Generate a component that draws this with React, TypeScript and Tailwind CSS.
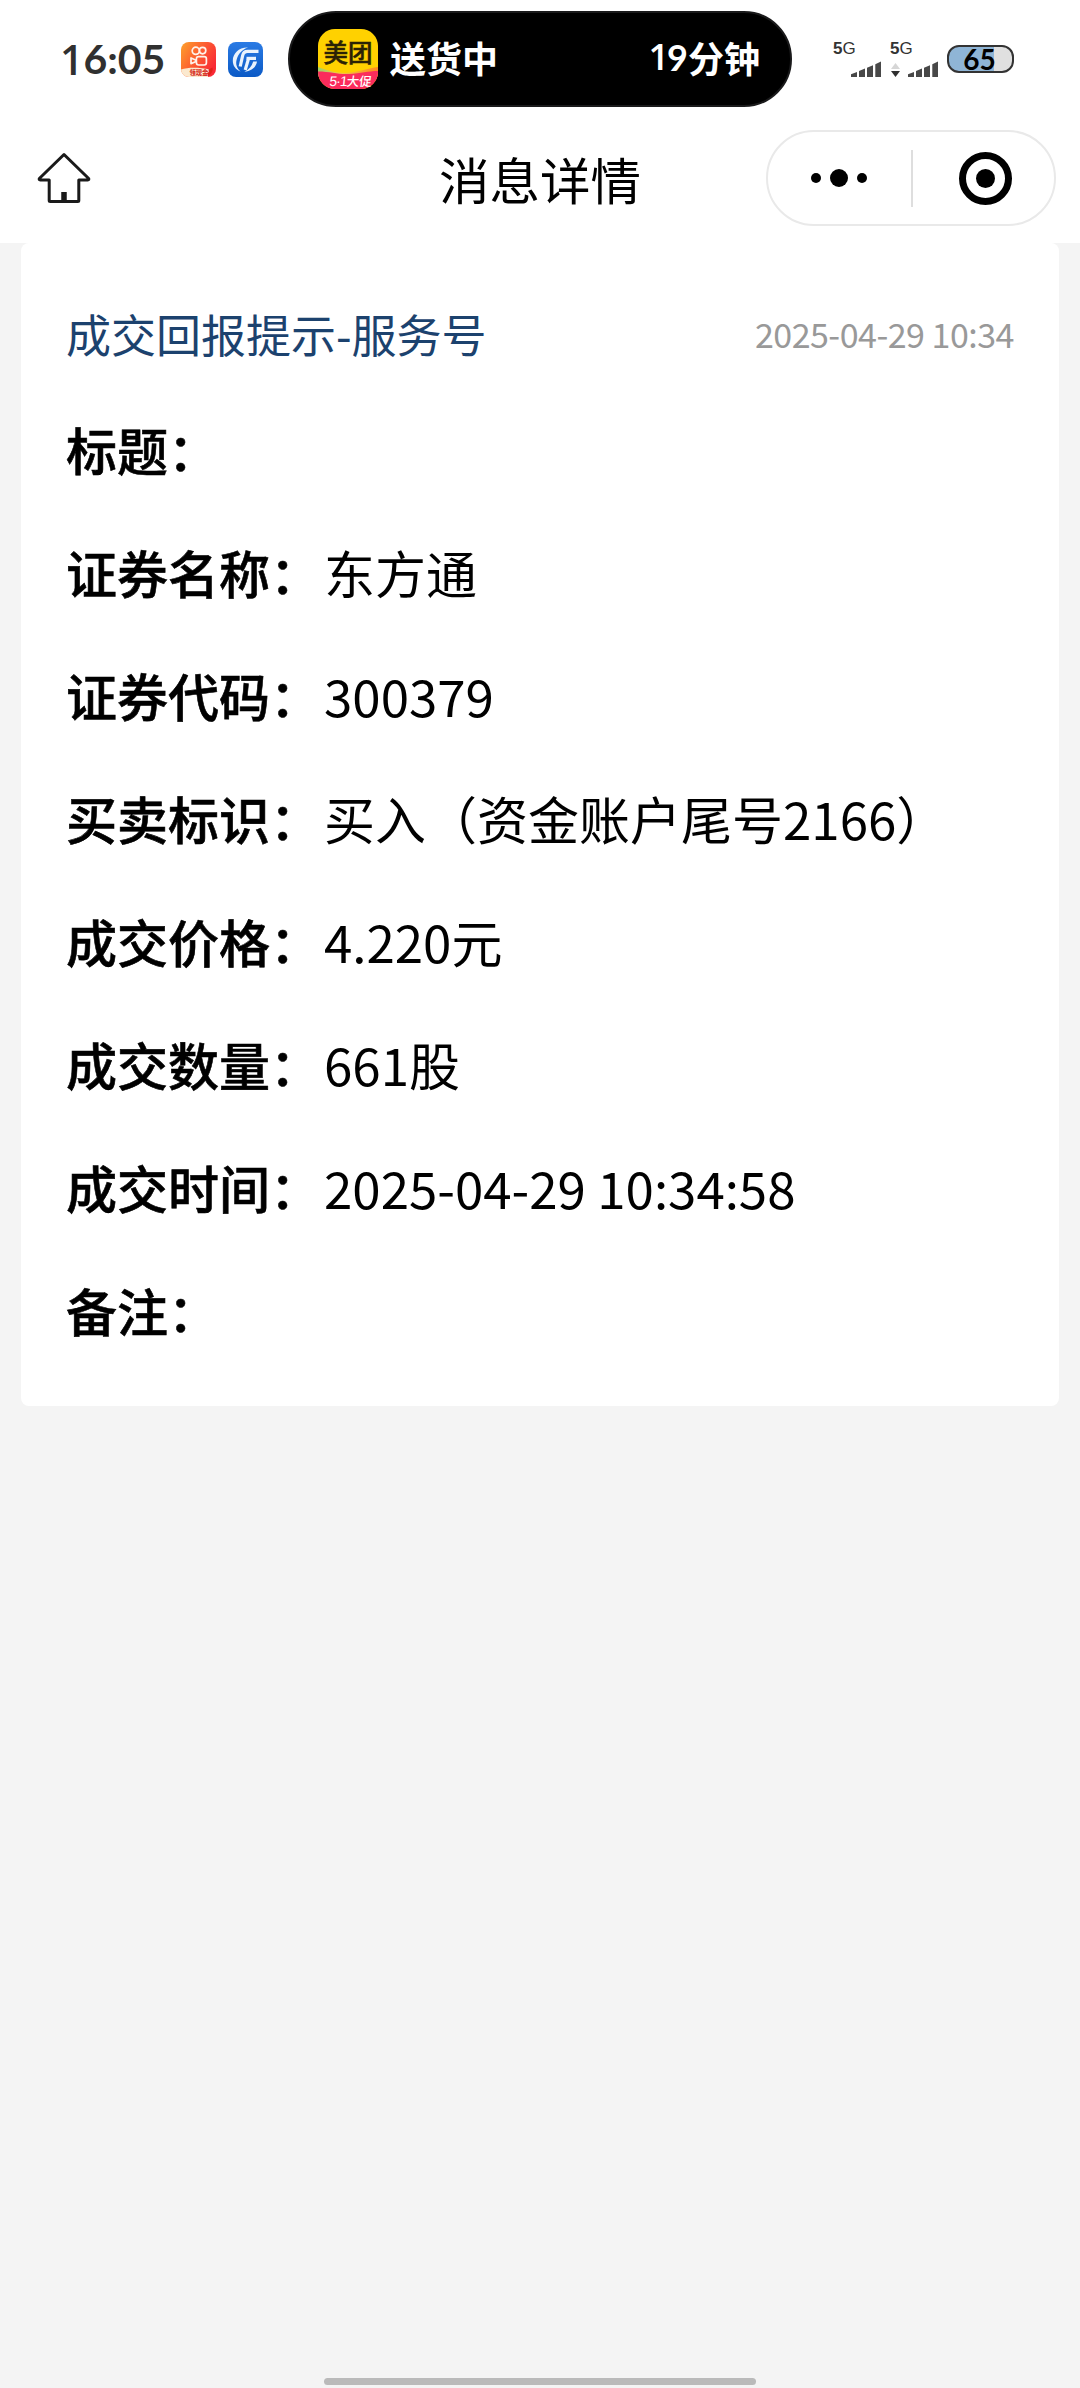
import { clsx } from "clsx";

// --- Message content ---

const message = {
  title: "成交回报提示-服务号",
  time: "2025-04-29 10:34",
};

const fields = [
  { label: "标题", value: "" },
  { label: "证券名称", value: "东方通" },
  { label: "证券代码", value: "300379" },
  { label: "买卖标识", value: "买入（资金账户尾号2166）" },
  { label: "成交价格", value: "4.220元" },
  { label: "成交数量", value: "661股" },
  { label: "成交时间", value: "2025-04-29 10:34:58" },
  { label: "备注", value: "" },
];

// --- Icons ---

function KuaishouIcon() {
  return (
    <svg className="h-[35px] w-[35px]" viewBox="0 0 35 35">
      <defs>
        <linearGradient id="ks" x1="0" y1="0" x2="1" y2="0.6">
          <stop offset="0" stopColor="#FDA22C" />
          <stop offset="0.5" stopColor="#FD6130" />
          <stop offset="1" stopColor="#F92A35" />
        </linearGradient>
        <clipPath id="ksClip">
          <rect width="35" height="35" rx="8" />
        </clipPath>
      </defs>
      <g clipPath="url(#ksClip)">
        <rect width="35" height="35" fill="url(#ks)" />
        <g fill="none" stroke="#FFF3EA" strokeWidth="1.7" strokeLinejoin="round">
          <circle cx="14.8" cy="8.8" r="3.6" />
          <circle cx="21.6" cy="8.6" r="3.2" />
          <rect x="15.4" y="14.6" width="10" height="8.4" rx="2.2" />
          <path d="M14.6 18 10 16v5.600l4.600-1.800z" />
        </g>
        <path d="M0 27.500C8 25 18 25.400 29 27.500L27 35H0z" fill="#FBE9CF" />
        <text
          x="8.5"
          y="33.4"
          fontSize="6.3"
          fontWeight="900"
          fill="#D8352B"
          fontFamily="Noto Sans CJK SC, sans-serif"
        >
          领现金
        </text>
        <path d="M31.500 25.500c1 3-1 6-4 9l-1.600-3.500 2-1-.4-2.500z" fill="#E2231A" />
      </g>
    </svg>
  );
}

function BrokerIcon() {
  return (
    <svg className="h-[35px] w-[35px]" viewBox="0 0 35 35">
      <defs>
        <linearGradient id="broker" x1="0" y1="0" x2="0" y2="1">
          <stop offset="0" stopColor="#2B7BE4" />
          <stop offset="1" stopColor="#0B5AC6" />
        </linearGradient>
      </defs>
      <rect width="35" height="35" rx="8" fill="url(#broker)" />
      <path d="M20 5.600C11 5.200 4.800 11.500 4.800 18.800c0 5 3 9 7.700 10.700-3.600-3-5.200-7.400-3.800-12C10.200 12 14 7.600 20 5.600z" fill="#EAF3FD" />
      <g fill="none" stroke="#EAF3FD" strokeWidth="3.2">
        <path d="M30.500 9.400H19.500c-3 0-4.200 1.400-4.800 4L12.200 24.500" />
        <path d="M18.500 16.400h9.500" />
        <path d="M20.600 16.400 17.200 28" />
      </g>
      <path d="M29 19.500c-.8 5.600-5.400 9.800-12.600 10.200 4.200-2 7.400-5.200 8.800-10.200z" fill="#EAF3FD" />
    </svg>
  );
}

function MeituanIcon() {
  return (
    <svg className="h-[60px] w-[60px]" viewBox="0 0 60 60">
      <defs>
        <clipPath id="mtClip">
          <rect width="60" height="60" rx="17" />
        </clipPath>
        <linearGradient id="mtWave" x1="0" y1="0" x2="1" y2="0">
          <stop offset="0" stopColor="#9BD46A" />
          <stop offset="0.35" stopColor="#F3C64C" />
          <stop offset="1" stopColor="#FF8A1F" />
        </linearGradient>
      </defs>
      <g clipPath="url(#mtClip)">
        <rect width="60" height="60" fill="#FFD100" />
        <path d="M0 38c10 4 22 7 33 5.500C43 42.500 50 39 60 38v10H0z" fill="url(#mtWave)" />
        <path d="M0 42.500c12 0 20 3 31 2.500C43 44.500 50 42 60 42v18H0z" fill="#FB2C5C" />
      </g>
      <text
        x="5.5"
        y="32.5"
        fontSize="24.5"
        fontWeight="500"
        fill="#2A2205"
        stroke="#2A2205"
        strokeWidth="0.5"
        fontFamily="Noto Sans CJK SC, sans-serif"
      >
        美团
      </text>
      <text
        x="17"
        y="56.8"
        fontSize="12.5"
        fontWeight="500"
        fill="#FFFFFF"
        transform="skewX(-6)"
        fontFamily="Noto Sans CJK SC, sans-serif"
      >
        <tspan fontFamily="Liberation Sans, sans-serif" fontSize="14" letterSpacing="-1">
          5·1
        </tspan>
        <tspan>大促</tspan>
      </text>
    </svg>
  );
}

function SignalBars() {
  return (
    <svg className="h-4 w-[30px]" viewBox="0 0 30 16" fill="#484848">
      <path d="M0 13.200 6 11v5.500H0zM8 10l6-2.500v9H8zM16 6.800l6-2.500v12.200h-6zM24.300 3.200 30 .5v16h-5.700z" />
    </svg>
  );
}

function HomeIcon() {
  return (
    <svg className="h-[52px] w-[54px]" viewBox="0 0 54 52" fill="none" stroke="#1A1A1A">
      <path
        d="M27 2.500 2.600 26.300c-.8.900-.5 1.700.7 1.700h8.900v20.500c0 .7.300 1 1 1h27.600c.7 0 1-.3 1-1V28h8.900c1.200 0 1.500-.8.700-1.700z"
        strokeWidth="3"
        strokeLinejoin="round"
      />
      <path d="M27 40v9" strokeWidth="5.5" />
    </svg>
  );
}

// --- Sections ---

function StatusBar() {
  return (
    <div className="flex h-[118px] pr-[65px] pl-[60px]">
      <div className="flex w-[228px] shrink-0 items-center">
        <div className="flex w-[121px] text-[41px] leading-[118px] font-bold text-[#303030] font-['Lato','Noto_Sans_CJK_SC',sans-serif]">
          <span className="font-['Open_Sans',sans-serif] font-semibold">1</span>
          <span>6:05</span>
        </div>
        <KuaishouIcon />
        <div className="ml-3">
          <BrokerIcon />
        </div>
      </div>
      <div className="mt-[11px] flex h-24 w-[504px] shrink-0 items-center rounded-full border-2 border-[#1A1A1B] bg-black pr-[30px] pl-7 text-4xl font-bold text-white">
        <MeituanIcon />
        <span className="-mt-1 ml-3">送货中</span>
        <span className="-mt-1 ml-auto flex items-center">
          <span className="font-['Open_Sans',sans-serif] font-semibold">1</span>
          <span className="-ml-[2px] font-['Lato',sans-serif]">9</span>
          <span>分钟</span>
        </span>
      </div>
      <div className="ml-[41px] flex pt-[41px] text-[#333]">
        <div className="flex w-12 flex-col">
          <span className="h-5 text-[17px] leading-4 font-['Liberation_Sans',sans-serif]">
            <b>5</b>G
          </span>
          <div className="self-end">
            <SignalBars />
          </div>
        </div>
        <div className="ml-[9px] flex w-12 flex-col">
          <span className="h-5 text-[17px] leading-4 font-['Liberation_Sans',sans-serif]">
            <b>5</b>G
          </span>
          <div className="flex justify-between pl-px">
            <svg className="mt-[2px] h-[14px] w-[9px]" viewBox="0 0 9 14">
              <path d="M4.500 0 9 6H0z" fill="#D6D6D6" />
              <path d="M0 8h9l-4.500 6z" fill="#303030" />
            </svg>
            <SignalBars />
          </div>
        </div>
        <div className="mt-1 ml-[9px] flex h-7 w-[67px] items-center justify-center rounded-[12px] border-2 border-[#333] bg-[linear-gradient(to_right,#8FB5D6_71%,#E0E0E0_71%)]">
          <span className="-ml-[2px] text-[28px] leading-6 font-bold text-black font-['Lato',sans-serif]">65</span>
        </div>
      </div>
    </div>
  );
}

function NavBar() {
  return (
    <div className="grid h-[125px] grid-cols-3 pr-6 pl-[37px]">
      <div className="pt-[34px]">
        <HomeIcon />
      </div>
      <h1 className="-ml-[13px] pt-6 text-center text-[50.5px] leading-[72px] whitespace-nowrap text-black">消息详情</h1>
      <div className="mt-3 flex h-24 w-[290px] items-center justify-self-end rounded-full border-2 border-[#E9E9E9]">
        <div className="flex w-[143px] items-center justify-center gap-[9px]">
          <i className="h-[10px] w-[10px] rounded-full bg-black" />
          <i className="h-[18px] w-[18px] rounded-full bg-black" />
          <i className="h-[10px] w-[10px] rounded-full bg-black" />
        </div>
        <div className="h-[57px] w-[2px] bg-[#DEDEDE]" />
        <div className="flex flex-1 justify-center pl-[5px]">
          <div className="flex h-[53px] w-[53px] items-center justify-center rounded-full border-[7px] border-black">
            <i className="h-[19px] w-[19px] rounded-full bg-black" />
          </div>
        </div>
      </div>
    </div>
  );
}

export default function App() {
  return (
    <div className="flex h-[2388px] w-[1080px] flex-col overflow-hidden bg-[#F4F4F4] font-['Noto_Sans_CJK_SC',sans-serif]">
      <header className="bg-white">
        <StatusBar />
        <NavBar />
      </header>

      <main className="mx-[21px] h-[1163px] rounded-lg bg-white px-[45px] pt-[57px]">
        <div className="flex h-[67px] items-center justify-between">
          <h2 className="text-[45px] text-[#1C426E]">{message.title}</h2>
          <time className="text-[34px] tracking-[-0.5px] text-[#999]">{message.time}</time>
        </div>
        <dl className="mt-[21px] text-[51px] leading-[123px] text-black">
          {fields.map((field) => (
            <div key={field.label} className="flex h-[123px]">
              <dt className="font-medium [-webkit-text-stroke:0.6px_black]">{field.label}：</dt>
              <dd className={clsx("whitespace-nowrap", field.value && "ml-[3px]")}>{field.value}</dd>
            </div>
          ))}
        </dl>
      </main>

      {/* Gesture bar */}
      <div className="mt-auto mb-[3px] h-[7px] w-[432px] self-center rounded-full bg-[#BABABA]" />
    </div>
  );
}
